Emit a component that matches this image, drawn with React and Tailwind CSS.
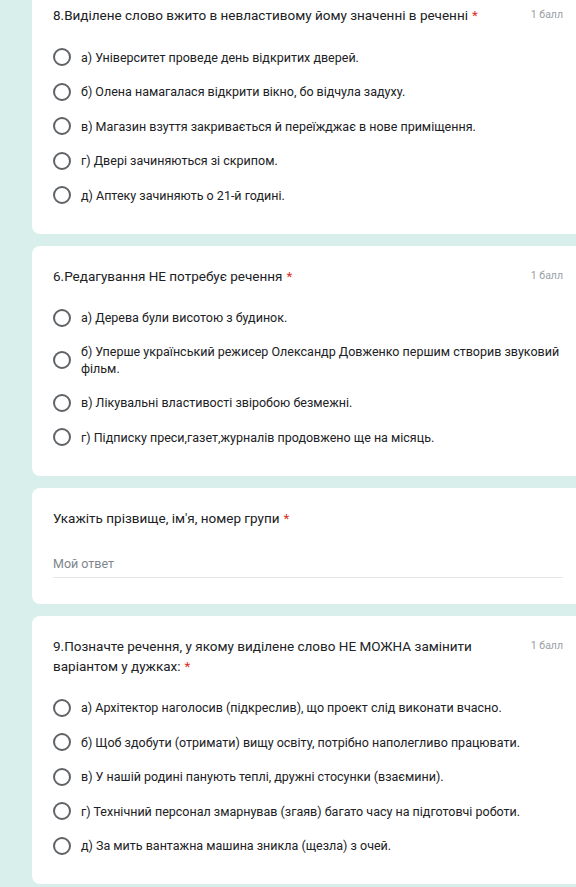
import React from "react";

const questions = [
  {
    title: "8.Виділене слово вжито в невластивому йому значенні в реченні",
    points: "1 балл",
    options: [
      "а) Університет проведе день відкритих дверей.",
      "б) Олена намагалася відкрити вікно, бо відчула задуху.",
      "в) Магазин взуття закривається й переїжджає в нове приміщення.",
      "г) Двері зачиняються зі скрипом.",
      "д) Аптеку зачиняють о 21-й годині.",
    ],
  },
  {
    title: "6.Редагування НЕ потребує речення",
    points: "1 балл",
    options: [
      "а) Дерева були висотою з будинок.",
      "б) Уперше український режисер Олександр Довженко першим створив звуковий фільм.",
      "в) Лікувальні властивості звіробою безмежні.",
      "г) Підписку преси,газет,журналів продовжено ще на місяць.",
    ],
  },
  { text: true, title: "Укажіть прізвище, ім'я, номер групи" },
  {
    title: "9.Позначте речення, у якому виділене слово НЕ МОЖНА замінити варіантом у дужках:",
    points: "1 балл",
    options: [
      "а) Архітектор наголосив (підкреслив), що проект слід виконати вчасно.",
      "б) Щоб здобути (отримати) вищу освіту, потрібно наполегливо працювати.",
      "в) У нашій родині панують теплі, дружні стосунки (взаємини).",
      "г) Технічний персонал змарнував (згаяв) багато часу на підготовчі роботи.",
      "д) За мить вантажна машина зникла (щезла) з очей.",
    ],
  },
];

function Card({ q }) {
  return (
    <div
      className={
        "bg-white rounded-l-lg pl-[21px] pr-[13px] pt-[20px] " +
        (q.text ? "pb-[26px]" : "pb-[21px]")
      }
    >
      <div className="flex items-start justify-between gap-4">
        <div className="text-[13.5px] leading-[20px] text-[#202124] max-w-[448px]">
          {q.title}
          <span className="ml-[4px] text-[#d93025]">*</span>
        </div>
        {q.points && (
          <div className="text-[10.5px] leading-[20px] text-[#9aa0a6] whitespace-nowrap">
            {q.points}
          </div>
        )}
      </div>
      {q.text ? (
        <div className="mt-[27px] border-b border-[#e6e6e6] pb-[5px]">
          <div className="text-[12.5px] leading-[17px] text-[#80868b]">Мой ответ</div>
        </div>
      ) : (
        <div className="mt-[15px] flex flex-col">
          {q.options.map((o) => (
            <div key={o} className="flex items-center py-[8.25px]">
              <div className="w-[18px] h-[18px] shrink-0 rounded-full border-2 border-[#5f6368]" />
              <div className="ml-[10px] text-[12.5px] leading-[17px] text-[#202124]">
                {o}
              </div>
            </div>
          ))}
        </div>
      )}
    </div>
  );
}

export default function App() {
  return (
    <div
      className="min-h-screen bg-[#d8efec] pl-[32px] overflow-hidden"
      style={{ fontFamily: "Roboto, 'Noto Sans', sans-serif" }}
    >
      <div className="-mt-[15px] flex flex-col gap-[12px]">
        {questions.map((q) => (
          <Card key={q.title} q={q} />
        ))}
      </div>
    </div>
  );
}
